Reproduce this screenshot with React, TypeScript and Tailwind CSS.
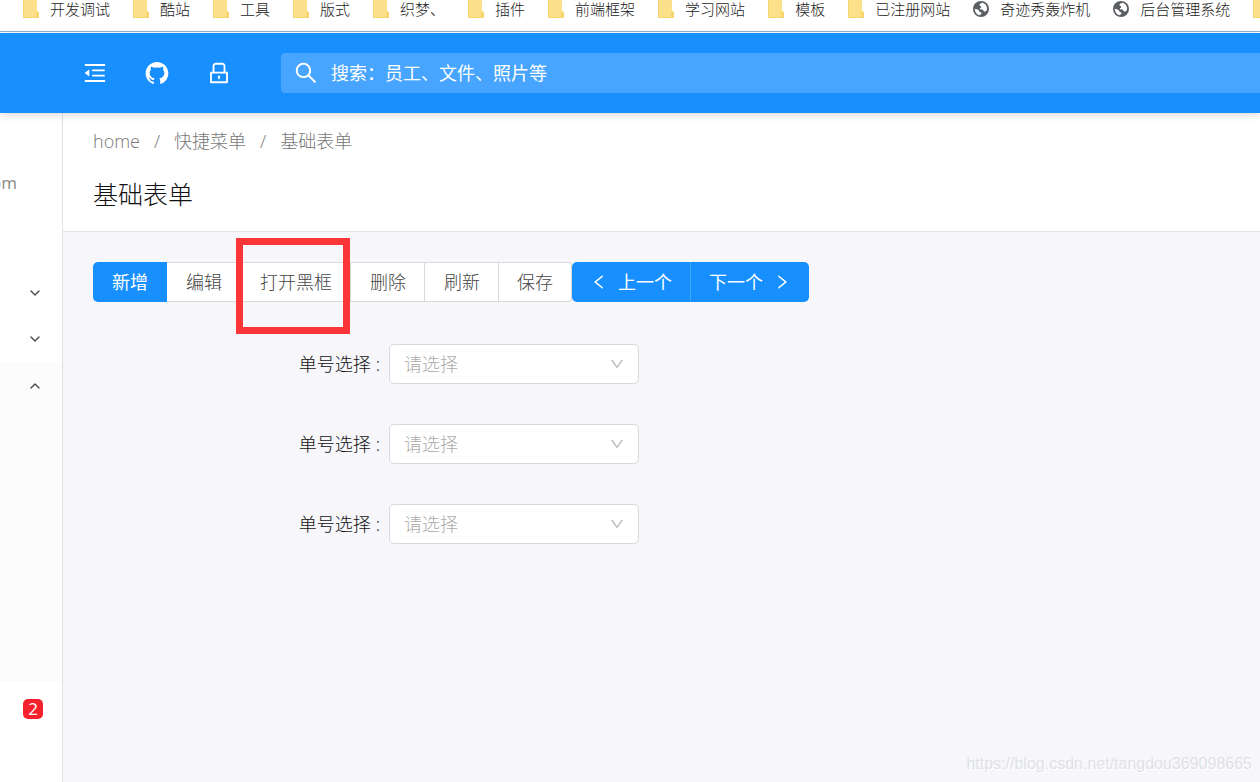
import type { ReactNode } from 'react';
import {
  AiFillGithub,
  AiOutlineDown,
  AiOutlineLeft,
  AiOutlineLock,
  AiOutlineMenuFold,
  AiOutlineRight,
  AiOutlineSearch,
} from 'react-icons/ai';
import { ChevronDown, ChevronUp } from 'lucide-react';

type Bookmark = { title: string; kind: 'folder' | 'site' };

const bookmarks: Bookmark[] = [
  { title: '开发调试', kind: 'folder' },
  { title: '酷站', kind: 'folder' },
  { title: '工具', kind: 'folder' },
  { title: '版式', kind: 'folder' },
  { title: '织梦、', kind: 'folder' },
  { title: '插件', kind: 'folder' },
  { title: '前端框架', kind: 'folder' },
  { title: '学习网站', kind: 'folder' },
  { title: '模板', kind: 'folder' },
  { title: '已注册网站', kind: 'folder' },
  { title: '奇迹秀轰炸机', kind: 'site' },
  { title: '后台管理系统', kind: 'site' },
  { title: '', kind: 'folder' },
];

const FolderIcon = () => (
  <svg viewBox="0 0 16 18" className="h-[18px] w-4 shrink-0" aria-hidden="true">
    <path d="M0 0h14v11l2 1v6H0z" fill="#fde08a" />
    <path d="M0 0h1v18H0z" fill="#f5d573" />
    <path d="M1 17h15v1H1zM13 12l2.500-.5.5 5.500-3 .5z" fill="#f6d56c" />
  </svg>
);

const GlobeIcon = () => (
  <svg viewBox="0 0 18 18" className="h-[18px] w-4 shrink-0 overflow-visible" aria-hidden="true">
    <circle cx="9" cy="9" r="9" fill="#5a5d61" />
    <path
      d="M10.500 2C8.400 2.400 7 3.600 7.400 4.800c.4 1 2 .9 1.900 2-.1 1-1.700 1-1.500 2 .3 1 2.300.4 3.300 1.100.8.6.6 1.600 1.400 1.900 1.400.3 2.900-.9 3.300-2.600.4-2.900-1.800-6.500-5.300-7.200zM2 8.600c1.400.2 3 .6 4.200 1.500 1 .8.5 1.700 1.500 2.200.9.4 2.100.3 2 1.300-.1.900-1.100 1.300-1.700 2.400C4.600 15.600 2 12.600 2 8.600z"
      fill="#fff"
    />
  </svg>
);

const BookmarkBar = () => (
  <nav className="flex h-8 items-start gap-[23px] overflow-hidden border-b border-[#8fb2d3] bg-white pl-[23px]">
    {bookmarks.map((item, i) => (
      <a
        key={i}
        href="#"
        aria-label={item.title || '书签'}
        className="flex h-[18px] shrink-0 items-center gap-[11px] text-[15px] leading-[18px] text-[#222]"
      >
        {item.kind === 'folder' ? <FolderIcon /> : <GlobeIcon />}
        {item.title && <span>{item.title}</span>}
      </a>
    ))}
  </nav>
);

const Header = () => (
  <header className="relative z-10 mt-px flex h-20 shrink-0 items-center bg-[#188fff] pl-[82px] text-white shadow-[0_2px_8px_rgba(0,0,0,0.15)]">
    <div className="flex items-center gap-9">
      <button type="button" aria-label="折叠菜单">
        <AiOutlineMenuFold className="h-[26px] w-[26px]" />
      </button>
      <a href="#" aria-label="GitHub">
        <AiFillGithub className="h-[26px] w-[26px]" />
      </a>
      <button type="button" aria-label="锁屏">
        <AiOutlineLock className="h-[26px] w-[26px]" />
      </button>
    </div>
    <label className="ml-[49px] flex h-10 flex-1 items-center gap-3 rounded-l bg-[#47a5ff] pl-3">
      <AiOutlineSearch className="h-[26px] w-[26px] shrink-0" />
      <input
        type="text"
        aria-label="搜索"
        placeholder="搜索：员工、文件、照片等"
        className="min-w-0 flex-1 bg-transparent text-lg font-normal outline-none placeholder:text-white"
      />
    </label>
  </header>
);

const Sidebar = () => (
  <aside className="flex w-[63px] shrink-0 flex-col border-r border-[#e0e1e6] bg-white text-[#444]">
    <div className="flex h-[157px] items-start pt-[58px]">
      <span className="flex w-[17px] justify-end overflow-hidden text-[17px] font-normal leading-6 text-[#888]">
        om
      </span>
    </div>
    <button type="button" aria-label="展开" className="flex h-[46px] items-center pl-[27px]">
      <ChevronDown className="h-4 w-4" />
    </button>
    <button type="button" aria-label="展开" className="flex h-[46px] items-center pl-[27px]">
      <ChevronDown className="h-4 w-4" />
    </button>
    <div className="h-80 bg-[#fcfcfc]">
      <button type="button" aria-label="收起" className="flex h-12 items-center pl-[27px]">
        <ChevronUp className="h-4 w-4" />
      </button>
    </div>
    <div className="flex h-[54px] items-center pl-[23px]">
      <span className="flex h-5 w-5 items-center justify-center rounded-[5px] bg-[#f5222d] text-[17px] font-normal leading-5 text-white">
        2
      </span>
    </div>
  </aside>
);

const PageHeader = () => (
  <div className="border-b border-[#e4e5e9] bg-white px-[30px] pb-5 pt-4">
    <nav className="flex gap-[14px] text-lg leading-6 text-[#777]">
      <a href="#">home</a>
      <span>/</span>
      <a href="#">快捷菜单</a>
      <span>/</span>
      <a href="#">基础表单</a>
    </nav>
    <h1 className="mt-6 text-[25px] leading-[34px] text-[#111]">基础表单</h1>
  </div>
);

const ToolButton = ({ children, last }: { children: ReactNode; last?: boolean }) => (
  <button
    type="button"
    className={
      last
        ? 'relative h-10 rounded-r border-y border-r border-[#d9d9d9] bg-white px-[18px]'
        : 'relative h-10 border-y border-r border-[#d9d9d9] bg-white pl-[19px] pr-[18px]'
    }
  >
    {children}
  </button>
);

const Toolbar = () => (
  <div className="flex text-lg text-[#444]">
    <button type="button" className="h-10 rounded-l-[5px] bg-[#188fff] px-[19px] font-normal text-white">
      新增
    </button>
    <ToolButton>编辑</ToolButton>
    <ToolButton>
      打开黑框
      <span className="pointer-events-none absolute -left-[5px] -top-[25px] z-10 h-24 w-[114px] border-[7px] border-[#fb3638]" />
    </ToolButton>
    <ToolButton>删除</ToolButton>
    <ToolButton>刷新</ToolButton>
    <ToolButton last>保存</ToolButton>
    <div className="flex font-normal text-white">
      <button
        type="button"
        className="flex h-10 items-center gap-[10px] rounded-l-[5px] border-r border-[#40a9ff] bg-[#188fff] px-[18px]"
      >
        <AiOutlineLeft className="h-[18px] w-[18px]" />
        上一个
      </button>
      <button type="button" className="flex h-10 items-center gap-[10px] rounded-r-[5px] bg-[#188fff] px-[18px]">
        下一个
        <AiOutlineRight className="h-[18px] w-[18px]" />
      </button>
    </div>
  </div>
);

const FormRow = ({ id }: { id: string }) => (
  <div className="flex items-center">
    <label htmlFor={id} className="flex w-[296px] justify-end gap-[5px] pr-[9px] text-lg text-[#111]">
      单号选择
      <span>:</span>
    </label>
    <div className="relative">
      <select
        id={id}
        defaultValue=""
        className="h-10 w-[250px] appearance-none rounded-[5px] border border-[#d9d9d9] bg-white px-[14px] text-lg text-[#aaa] outline-none"
      >
        <option value="">请选择</option>
      </select>
      <AiOutlineDown className="pointer-events-none absolute right-[14px] top-3 h-4 w-4 text-[#b5b5b5]" />
    </div>
  </div>
);

const App = () => {
  return (
    <div className="flex min-h-screen flex-col overflow-hidden bg-white font-['Open_Sans','Noto_Sans_CJK_SC',sans-serif] font-light">
      <BookmarkBar />
      <Header />
      <div className="flex flex-1">
        <Sidebar />
        <main className="relative min-w-0 flex-1 bg-[#f6f6fb]">
          <PageHeader />
          <div className="p-[30px]">
            <Toolbar />
            <form className="mt-[42px] flex flex-col gap-10">
              <FormRow id="order-1" />
              <FormRow id="order-2" />
              <FormRow id="order-3" />
            </form>
          </div>
          <span className="absolute bottom-2 right-2 font-['Liberation_Sans',sans-serif] text-base leading-5 text-[#e0e1e5] [text-shadow:1px_1px_0_#fff]">
            https://blog.csdn.net/tangdou369098665
          </span>
        </main>
      </div>
    </div>
  );
};

export default App;
